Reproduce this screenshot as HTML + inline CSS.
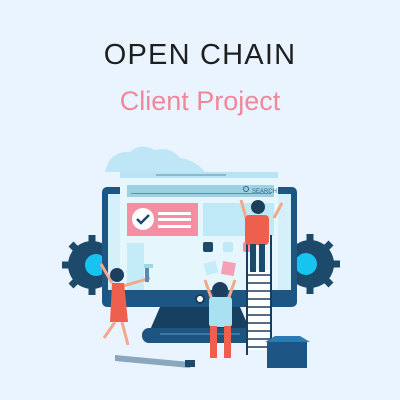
<!DOCTYPE html>
<html><head><style>
html,body{margin:0;padding:0;width:400px;height:400px;background:#eaf4fe;overflow:hidden}
.t{position:absolute;left:0;width:400px;text-align:center;font-family:"Liberation Sans",sans-serif}
</style></head><body>
<div class="t" style="top:39px;font-size:29px;color:#1f1f1f;letter-spacing:1.2px">OPEN CHAIN</div>
<div class="t" style="top:86px;font-size:27px;color:#f2879b">Client Project</div>
<svg width="400" height="400" style="position:absolute;left:0;top:0">
<path d="M105 172 Q110 150 130 152 Q140 142 155 150 Q170 146 180 158 Q195 160 205 172 Z" fill="#bfe6f7"/>
<g fill="#1d4a6b">
<circle cx="92" cy="265" r="24"/>
<g stroke="#1d4a6b" stroke-width="7">
<line x1="92" y1="235" x2="92" y2="295"/><line x1="62" y1="265" x2="122" y2="265"/>
<line x1="71" y1="244" x2="113" y2="286"/><line x1="71" y1="286" x2="113" y2="244"/>
</g>
<circle cx="310" cy="264" r="24"/>
<g stroke="#1d4a6b" stroke-width="7">
<line x1="310" y1="234" x2="310" y2="294"/><line x1="280" y1="264" x2="340" y2="264"/>
<line x1="289" y1="243" x2="331" y2="285"/><line x1="289" y1="285" x2="331" y2="243"/>
</g>
</g>
<circle cx="96" cy="265" r="11" fill="#19c3f0"/><circle cx="306" cy="264" r="11" fill="#19c3f0"/>
<path d="M160 307 L240 307 L250 330 L150 330 Z" fill="#173f60"/>
<rect x="142" y="328" width="118" height="15" rx="7" fill="#1e5580"/>
<rect x="160" y="333" width="80" height="2" fill="#3a78a8"/>
<rect x="102" y="187" width="195" height="120" rx="5" fill="#1d5584"/>
<rect x="108" y="194" width="183" height="96" fill="#d6f0fb"/>
<circle cx="200" cy="299" r="4" fill="#fff" stroke="#173f60" stroke-width="2"/>
<rect x="120" y="172" width="158" height="118" fill="#e6f6fd"/>
<rect x="120" y="172" width="158" height="6" fill="#b9e3f3"/>
<rect x="156" y="174" width="70" height="2" fill="#8ab8cf"/>
<rect x="127" y="185" width="147" height="12" fill="#9cd0e3"/>
<rect x="131" y="193" width="140" height="1" fill="#5d8fb0"/>
<text x="252" y="193" font-family="Liberation Sans" font-size="6" fill="#35658a">SEARCH</text>
<circle cx="246" cy="189" r="2.5" fill="none" stroke="#35658a"/>
<rect x="127" y="203" width="71" height="33" fill="#f48fa3"/>
<circle cx="143" cy="219" r="11" fill="#fff"/>
<path d="M137 219 l4 4 l8 -8" stroke="#1d4a6b" stroke-width="2.5" fill="none"/>
<rect x="158" y="212" width="33" height="3" fill="#fff"/><rect x="158" y="218" width="33" height="3" fill="#fff"/><rect x="158" y="225" width="33" height="3" fill="#fff"/>
<rect x="203" y="203" width="71" height="33" fill="#bfe9f7"/>
<rect x="127" y="243" width="17" height="47" fill="#c3ecf8"/>
<rect x="203" y="242" width="10" height="10" rx="2" fill="#1d4a6b"/>
<rect x="223" y="242" width="10" height="10" rx="2" fill="#bfe9f7"/>
<rect x="243" y="242" width="10" height="10" rx="2" fill="#f48fa3"/>
<rect x="205" y="262" width="12" height="12" fill="#c4ecfb" transform="rotate(-15 211 268)"/>
<rect x="222" y="262" width="13" height="13" fill="#f4a0b6" transform="rotate(10 228 268)"/>
<g stroke="#173f60" stroke-width="2"><line x1="247" y1="235" x2="247" y2="355"/><line x1="271" y1="235" x2="271" y2="355"/></g>
<rect x="248" y="270" width="22" height="80" fill="#fff"/>
<g stroke="#173f60" stroke-width="1.5">
<line x1="247" y1="275" x2="271" y2="275"/><line x1="247" y1="283" x2="271" y2="283"/><line x1="247" y1="291" x2="271" y2="291"/><line x1="247" y1="299" x2="271" y2="299"/><line x1="247" y1="307" x2="271" y2="307"/><line x1="247" y1="315" x2="271" y2="315"/><line x1="247" y1="323" x2="271" y2="323"/><line x1="247" y1="331" x2="271" y2="331"/><line x1="247" y1="339" x2="271" y2="339"/><line x1="247" y1="347" x2="271" y2="347"/>
</g>
<path d="M241 200 L246 218 M282 203 L274 218" stroke="#f2a88a" stroke-width="3"/>
<rect x="245" y="215" width="24" height="30" rx="4" fill="#ef5f4e"/>
<rect x="250" y="244" width="6" height="28" fill="#1d4a6b"/><rect x="259" y="244" width="6" height="28" fill="#1d4a6b"/>
<circle cx="258" cy="207" r="7" fill="#1d3f5e"/>
<rect x="267" y="342" width="40" height="26" fill="#1d5584"/>
<path d="M265 342 L275 336 L300 336 L310 342 Z" fill="#2a7bb3"/>
<path d="M101 264 L112 283 M120 287 L150 278" stroke="#f2a88a" stroke-width="3"/>
<rect x="145" y="266" width="4" height="16" fill="#5a8ab0"/><rect x="144" y="264" width="9" height="4" fill="#9fd7ea"/>
<circle cx="117" cy="275" r="7" fill="#1d3f5e"/>
<path d="M112 283 L124 283 L128 322 L110 322 Z" fill="#ef5f4e"/>
<path d="M115 322 L104 338 M122 322 L128 345" stroke="#f2a88a" stroke-width="3"/>
<path d="M205 280 L212 300 M235 280 L228 300" stroke="#f2a88a" stroke-width="3"/>
<circle cx="220" cy="290" r="8" fill="#1d3f5e"/>
<rect x="209" y="297" width="23" height="30" rx="3" fill="#a9e1f3"/>
<rect x="210" y="326" width="7" height="32" fill="#ef5f4e"/><rect x="224" y="326" width="7" height="32" fill="#ef5f4e"/>
<path d="M115 355 L190 362 L190 368 L115 361 Z" fill="#8aa7bd"/>
<rect x="185" y="360" width="10" height="7" fill="#1d4a6b"/>
</svg>
</body></html>
